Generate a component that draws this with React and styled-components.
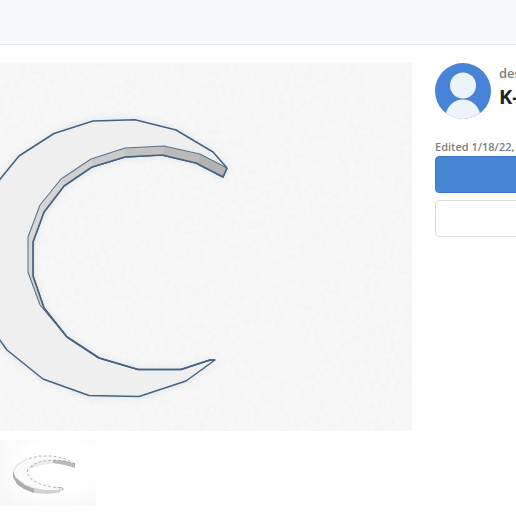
import styled, { createGlobalStyle } from 'styled-components';

const GlobalStyle = createGlobalStyle`
  * {
    box-sizing: border-box;
  }

  body {
    margin: 0;
    background-color: #fff;
    font-family: 'Open Sans', 'Noto Sans', sans-serif;
    overflow-x: hidden;
  }
`;

const Header = styled.header`
  height: 45px;
  background-color: #f6f8fa;
  border-bottom: 1px solid #e1e4e8;
`;

const Main = styled.main`
  display: flex;
  align-items: flex-start;
  gap: 23px;
  padding-top: 18px;
`;

const Gallery = styled.section`
  display: flex;
  flex: 1;
  flex-direction: column;
  align-items: flex-start;
  gap: 9px;
  min-width: 0;
`;

const Drawing = styled.svg`
  display: block;
  width: 100%;
  height: auto;
`;

const ThumbButton = styled.button`
  width: 96px;
  padding: 0;
  border: 0;
  background: none;
  cursor: pointer;
`;

const Details = styled.aside`
  flex: 0 0 81px;
  overflow: hidden;
  white-space: nowrap;
`;

const Owner = styled.div`
  display: flex;
  gap: 8px;
`;

const AvatarIcon = styled.svg`
  flex: none;
  width: 56px;
  height: 56px;
`;

const Label = styled.div`
  color: #808080;
  font-size: 13px;
  font-weight: 600;
  line-height: 20px;
`;

const Title = styled.h1`
  margin: 0;
  color: #222;
  font-size: 20px;
  font-weight: 700;
  line-height: 28px;
`;

const Edited = styled.p`
  margin: 20px 0 0;
  color: #808080;
  font-size: 11px;
  font-weight: 600;
  line-height: 16px;
`;

const Actions = styled.div`
  display: flex;
  flex-direction: column;
  gap: 7px;
  width: 160px;
  margin-top: 1px;
`;

const Button = styled.button`
  height: 37px;
  border: 1px solid ${({ $primary }) => ($primary ? '#3b78cb' : '#dcdcdc')};
  border-radius: 4px;
  background-color: ${({ $primary }) => ($primary ? '#4684d4' : '#fff')};
  cursor: pointer;
`;

const edge = '#456382';

// inner wall of the crescent, one shade per face
const wallTop = [
  [227, 168], [200, 154], [164, 146], [125, 148], [91, 159], [61, 179],
  [40, 205], [28, 237], [28, 272], [40, 305], [66, 336],
];
const wallBottom = [
  [223, 177], [196, 163], [162, 155], [125, 157], [92, 167], [64, 186],
  [44, 212], [33, 242], [33, 276], [44, 308], [67, 337],
];
const shades = [
  '#b3b3b3', '#bababa', '#c2c2c2', '#cacaca', '#d0d0d0',
  '#d5d5d5', '#d8d8d8', '#d8d8d8', '#d2d2d2', '#b8bcc2',
];
const toPoints = list => list.map(p => p.join(',')).join(' ');

const outline =
  'M227 168L213 152L176 130L135 119.7L93 121L54 133.5L19 156L-12 194L-30 250L-18 315L7 350L43 379L89 395.5L139 396.5L186 381L215 360L210 360L181 369.5L138 369.5L99 358L67 337L44 308L33 276L33 242L44 212L64 186L92 167L125 157L162 155L196 163L223 177Z';

const ModelView = () => (
  <Drawing viewBox="0 63 412 368" role="img" aria-label="Crescent model">
    <defs>
      <filter id="grain" x="0" y="0" width="100%" height="100%" colorInterpolationFilters="sRGB">
        <feTurbulence type="fractalNoise" baseFrequency="0.2" numOctaves="2" />
        <feColorMatrix values="0.025 0 0 0 0.954  0.025 0 0 0 0.954  0.025 0 0 0 0.954  0 0 0 0 1" />
      </filter>
      <filter id="shade" x="-10%" y="-10%" width="120%" height="120%">
        <feGaussianBlur stdDeviation="4" />
      </filter>
    </defs>
    <rect y="63" width="412" height="368" filter="url(#grain)" />
    <path d={outline} fill="#a9bccb" opacity="0.4" filter="url(#shade)" />
    <path d={outline} fill="#efefef" stroke={edge} strokeWidth="1.5" strokeLinejoin="round" />
    {shades.map((shade, i) => (
      <polygon
        key={i}
        points={toPoints([wallTop[i], wallTop[i + 1], wallBottom[i + 1], wallBottom[i]])}
        fill={shade}
      />
    ))}
    <g fill="none" stroke={edge} strokeLinejoin="round">
      <polyline points={toPoints(wallTop)} strokeWidth="1.1" opacity="0.85" />
      <polyline points={toPoints([wallTop[0], ...wallBottom])} strokeWidth="1.6" />
      <path d="M67 337L99 358L138 369.5L181 369.5L210 360L215 360" strokeWidth="1.7" />
    </g>
  </Drawing>
);

const Thumbnail = () => (
  <Drawing viewBox="0 0 96 66" aria-hidden="true">
    <defs>
      <radialGradient id="backdrop" cx="60%" cy="40%" r="75%">
        <stop offset="0.5" stopColor="#fff" />
        <stop offset="1" stopColor="#f7f7f7" />
      </radialGradient>
    </defs>
    <rect width="96" height="66" fill="url(#backdrop)" />
    {/* outer side */}
    <path d="M13 31L13 37L17 44L24 49L34 53L46 54L56 53L63 49L63 47L40 47L20 41Z" fill="#d2d2d2" />
    <path d="M13 31L13 37L17 44L24 49L34 53L34 49L24 45L17 39Z" fill="#acacac" />
    {/* top face */}
    <path
      d="M75 24L66 19L53 16L39 16L27 19L17 25L13 32L16 38L24 44L34 48L46 50L57 50L63 48L51 47L40 44L31 39L27 33L28 28L33 24L42 21L54 20L66 21Z"
      fill="#fafafa"
    />
    {/* inner side */}
    <path d="M32 25L42 21L54 20L66 21L75 24L75 27L66 25L54 23L42 25L32 28Z" fill="#ececec" />
    <path d="M53 20L66 21L75 24L75 28L64 25L53 23Z" fill="#bcbcbc" />
    <g fill="none" stroke="#888" strokeWidth="0.6" strokeDasharray="3 2">
      <path d="M75 24L66 19L53 16L39 16L27 19" />
      <path d="M32 28V25L42 21L54 20L65 21L75 24V27" />
      <path d="M32 26L28 29L27 33L31 39L40 44L51 47L63 48L63 50L57 53" />
    </g>
    <path d="M27 19L17 25L13 32L16 38L24 44" fill="none" stroke="#bbb" strokeWidth="0.6" />
  </Drawing>
);

const Avatar = () => (
  <AvatarIcon viewBox="0 0 56 56" role="img" aria-label="User avatar">
    <clipPath id="round">
      <circle cx="28" cy="28" r="28" />
    </clipPath>
    <g clipPath="url(#round)">
      <rect width="56" height="56" fill="#4883d7" />
      <circle cx="28" cy="22.5" r="13" fill="#edf3fb" />
      <ellipse cx="28" cy="54.5" rx="17.5" ry="18" fill="#edf3fb" />
    </g>
  </AvatarIcon>
);

const App = () => (
  <>
    <GlobalStyle />
    <Header />
    <Main>
      <Gallery>
        <ModelView />
        <ThumbButton aria-label="Show preview">
          <Thumbnail />
        </ThumbButton>
      </Gallery>
      <Details>
        <Owner>
          <Avatar />
          <div>
            <Label>des</Label>
            <Title>K-</Title>
          </div>
        </Owner>
        <Edited>Edited 1/18/22, 0</Edited>
        <Actions>
          <Button $primary aria-label="Copy design" />
          <Button aria-label="Download" />
        </Actions>
      </Details>
    </Main>
  </>
);

export default App;
